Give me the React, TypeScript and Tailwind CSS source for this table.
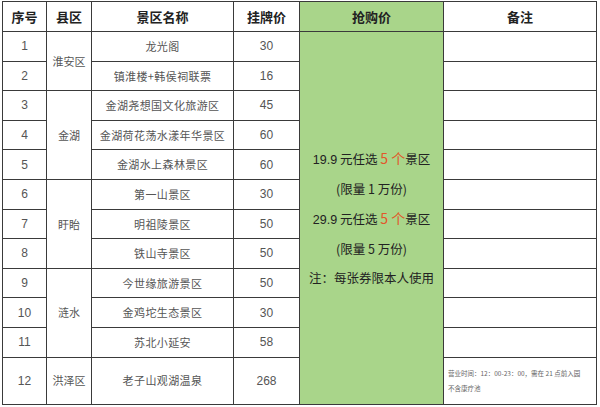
const rows = [
  { no: '1', name: '龙光阁', price: '30' },
  { no: '2', name: '镇淮楼+韩侯祠联票', price: '16' },
  { no: '3', name: '金湖尧想国文化旅游区', price: '45' },
  { no: '4', name: '金湖荷花荡水漾年华景区', price: '60' },
  { no: '5', name: '金湖水上森林景区', price: '60' },
  { no: '6', name: '第一山景区', price: '30' },
  { no: '7', name: '明祖陵景区', price: '50' },
  { no: '8', name: '铁山寺景区', price: '50' },
  { no: '9', name: '今世缘旅游景区', price: '50' },
  { no: '10', name: '金鸡坨生态景区', price: '30' },
  { no: '11', name: '苏北小延安', price: '58' },
];

// county cells with their row spans, keyed by first row index
const counties: Record<number, { name: string; span: number }> = {
  0: { name: '淮安区', span: 2 },
  2: { name: '金湖', span: 3 },
  5: { name: '盱眙', span: 3 },
  8: { name: '涟水', span: 3 },
};

const cell = 'border border-[#3a3a3a] p-0 text-center align-middle';
const num = { fontFamily: '"Liberation Sans", Arial, sans-serif' };
const cjk = { fontFamily: '"Noto Sans CJK SC", sans-serif' };

const App = () => {
  return (
    <div className="w-[600px] h-[407px] bg-white pl-[2px] pt-[1px]">
      <table className="w-[594px] table-fixed border-collapse text-[11px] text-[#555]" style={cjk}>
        <colgroup>
          <col className="w-[44px]" />
          <col className="w-[45px]" />
          <col className="w-[142px]" />
          <col className="w-[66px]" />
          <col className="w-[144px]" />
          <col className="w-[153px]" />
        </colgroup>
        <thead>
          <tr className="h-[30px] text-[13px] font-bold text-[#222]">
            <th className={cell}>序号</th>
            <th className={cell}>县区</th>
            <th className={cell}>景区名称</th>
            <th className={cell}>挂牌价</th>
            <th className={`${cell} bg-[#a9d58a]`}>抢购价</th>
            <th className={cell}>备注</th>
          </tr>
        </thead>
        <tbody>
          {rows.map((r, i) => (
            <tr key={r.no} className="h-[29.6px]">
              <td className={`${cell} text-[12px]`} style={num}>{r.no}</td>
              {counties[i] && (
                <td className={cell} rowSpan={counties[i].span}>{counties[i].name}</td>
              )}
              <td className={`${cell} tracking-[0.4px] whitespace-nowrap`}>{r.name}</td>
              <td className={`${cell} text-[12px]`} style={num}>{r.price}</td>
              {i === 0 && (
                <td className={`${cell} bg-[#a9d58a] text-[12.5px] text-[#222]`} rowSpan={12}>
                  <div className="flex flex-col gap-[9px] leading-[20px] mt-[1px]">
                    <div>
                      <span style={num}>19.9</span> 元任选 <span className="text-[#e2572b] text-[14px]">5 个</span>景区
                    </div>
                    <div>(限量 1 万份)</div>
                    <div>
                      <span style={num}>29.9</span> 元任选 <span className="text-[#e2572b] text-[14px]">5 个</span>景区
                    </div>
                    <div>(限量 5 万份)</div>
                    <div>注：每张券限本人使用</div>
                  </div>
                </td>
              )}
              <td className={cell}></td>
            </tr>
          ))}
          <tr className="h-[47px]">
            <td className={`${cell} text-[12px]`} style={num}>12</td>
            <td className={cell}>洪泽区</td>
            <td className={`${cell} tracking-[0.4px]`}>老子山观湖温泉</td>
            <td className={`${cell} text-[12px]`} style={num}>268</td>
            <td className={`${cell} text-left px-[4px] text-[6.5px] leading-[15px] text-[#666]`}>
              <div>营业时间：12：00-23：00，需在 21 点前入园</div>
              <div>不含康疗池</div>
            </td>
          </tr>
        </tbody>
      </table>
    </div>
  );
};

export default App;
